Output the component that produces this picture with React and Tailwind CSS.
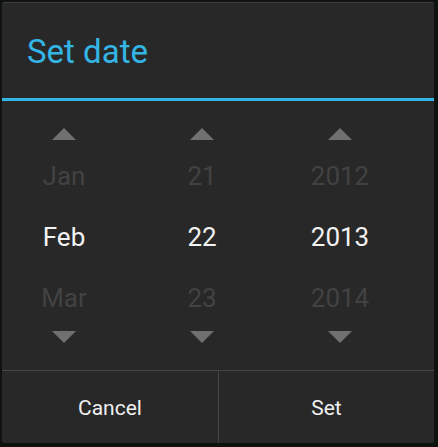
import React from 'react';

const columns = [
    { prev: 'Jan', current: 'Feb', next: 'Mar' },
    { prev: '21', current: '22', next: '23' },
    { prev: '2012', current: '2013', next: '2014' },
];

function Arrow({ down }) {
    return (
        <svg width="24" height="12" viewBox="0 0 24 12" className="block">
            {down ? <polygon points="0,0 24,0 12,12" fill="#6f716f" /> : <polygon points="12,0 24,12 0,12" fill="#6f716f" />}
        </svg>
    );
}

export default function App() {
    return (
        <div className="w-[438px] h-[447px] bg-[#0f130f] pt-[2px] pl-[2px] font-['Roboto',sans-serif]">
            <div className="w-[432px] h-[441px] bg-[#282828] rounded-[2px] border-t border-[#3a3d3a] flex flex-col overflow-hidden">
                {/* title */}
                <div className="h-[95px] flex items-center pl-[25px] pt-[2px] shrink-0">
                    <span className="text-[33px] leading-none text-[#33b5e5]">Set date</span>
                </div>
                <div className="h-[3px] bg-[#33b5e5] shrink-0"></div>

                {/* pickers */}
                <div className="h-[269px] flex pl-[14px] gap-[42px] pt-[27px] shrink-0">
                    {columns.map((col, i) => (
                        <div key={i} className="w-[96px] flex flex-col items-center">
                            <Arrow />
                            <div className="mt-[6px] h-[61px] flex items-center text-[26px] text-[#424242]">{col.prev}</div>
                            <div className="h-[61px] flex items-center text-[26px] text-[#f2f2f2]">{col.current}</div>
                            <div className="h-[61px] flex items-center text-[26px] text-[#424242]">{col.next}</div>
                            <div className="mt-[2px]"><Arrow down /></div>
                        </div>
                    ))}
                </div>

                {/* buttons */}
                <div className="flex-1 flex border-t border-[#464646]">
                    <div className="w-[217px] flex items-center justify-center pt-[3px] text-[21px] text-[#f0f0f0] border-r border-[#464646]">Cancel</div>
                    <div className="flex-1 flex items-center justify-center pt-[3px] text-[21px] text-[#f0f0f0]">Set</div>
                </div>
            </div>
        </div>
    );
}
